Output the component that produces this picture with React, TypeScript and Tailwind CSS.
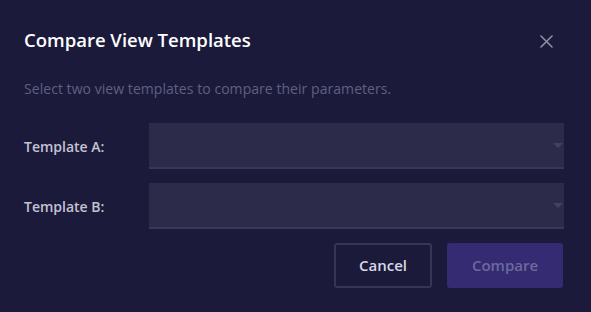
import React from "react";

export default function App() {
  return (
    <div
      className="w-[591px] h-[312px] bg-[#1b1a3b] overflow-hidden"
      style={{ fontFamily: '"Open Sans", "Noto Sans", sans-serif' }}
    >
      <div className="flex items-center justify-between pl-6 pr-[38px] pt-[26px] h-[54px]">
        <h2 className="text-[18.5px] leading-[28px] font-semibold text-white">
          Compare View Templates
        </h2>
        <svg width="13" height="13" viewBox="0 0 13 13" className="mt-[2px]">
          <path d="M1 1 L12 12 M12 1 L1 12" stroke="#8e8ea0" strokeWidth="1.6" strokeLinecap="round" />
        </svg>
      </div>
      <p className="pl-6 mt-[24px] text-[14px] leading-[22px] text-[#5f6082] tracking-[0.05px]">
        Select two view templates to compare their parameters.
      </p>
      <div className="mt-[23px] flex flex-col gap-[14px] pl-6 pr-[27px]">
        {["Template A:", "Template B:"].map((l) => (
          <div key={l} className="flex items-center">
            <span className="w-[125px] text-[14px] font-semibold text-[#c3c3d3]">{l}</span>
            <div className="relative flex-1 h-[46px] bg-[#2d2b4a] border-b-2 border-[#38365a]">
              <svg width="10" height="6" viewBox="0 0 10 6" className="absolute right-[1px] top-[20px]">
                <path d="M0 0 L10 0 L5 5 Z" fill="#44425f" />
              </svg>
            </div>
          </div>
        ))}
      </div>
      <div className="mt-[14px] flex justify-end gap-[15px] pr-[28px]">
        <button className="w-[98px] h-[45px] rounded-[3px] border-2 border-[#363556] text-[15px] font-semibold text-[#d8d8e4]">
          Cancel
        </button>
        <button className="w-[116px] h-[45px] rounded-[3px] bg-[#342b73] text-[15px] font-semibold text-[#6c6a9c]">
          Compare
        </button>
      </div>
    </div>
  );
}
